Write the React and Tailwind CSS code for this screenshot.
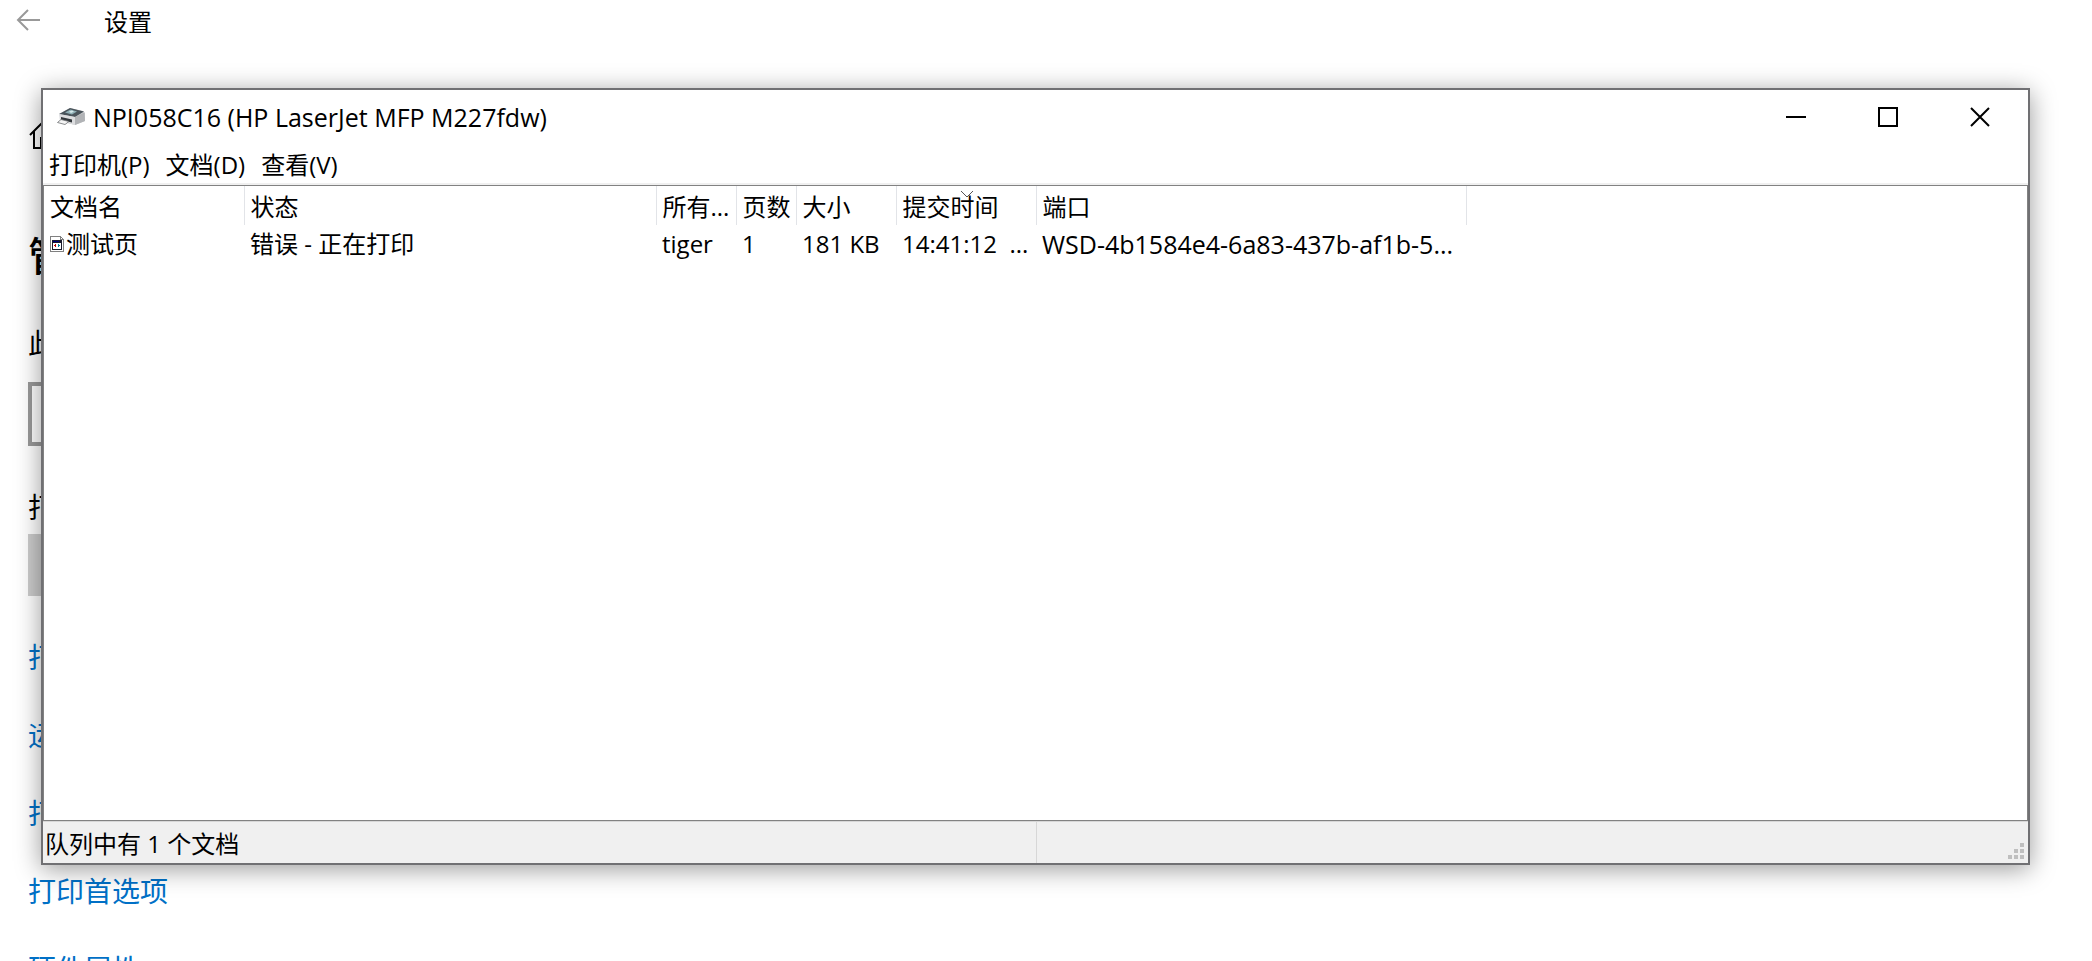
import React from 'react';

const columns = [
    { name: '文档名', width: 'w-[200px]' },
    { name: '状态', width: 'w-[412px]' },
    { name: '所有...', width: 'w-[80px]' },
    { name: '页数', width: 'w-[60px]' },
    { name: '大小', width: 'w-[100px]' },
    { name: '提交时间', width: 'w-[140px]', sorted: true },
    { name: '端口', width: 'w-[430px]' },
];

const jobs = [
    ['测试页', '错误 - 正在打印', 'tiger', '1', '181 KB', '14:41:12  ...', 'WSD-4b1584e4-6a83-437b-af1b-5...'],
];

const menus = ['打印机(P)', '文档(D)', '查看(V)'];

const links = ['打', '运', '打', '打印首选项', '硬件属性'];

function PrinterIcon() {
    return (
        <svg width="28" height="20" viewBox="0 0 28 20" aria-hidden="true">
            <path d="M3 7 L13 1 L26 4 L28 6 L28 14 L18 18 L3 14 Z" fill="#c9cbcd" />
            <path d="M2 7 L13 1 L27 4.5 L18 10 Z" fill="#4a545b" />
            <path d="M8 5.5 L13.5 2.5 L20 4.5 L15 7.5 Z" fill="#8fb0b6" />
            <path d="M12 4.5 L15 3.6 L17 4.5 L14 6 Z" fill="#d5e8ea" />
            <path d="M2 7 L18 10 L18 18 L3 14 Z" fill="#dcdddf" />
            <path d="M18 10 L27.5 5.5 L28 14 L18 18 Z" fill="#b1b3b6" />
            <path d="M4 10 L15 12.5 L15 15.5 L4 13 Z" fill="#33383c" />
            <path d="M4 12.5 L12 14.5 L8 17.5 L0.5 15.5 Z" fill="#f4f4f4" stroke="#6d7072" strokeWidth="0.8" />
        </svg>
    );
}

function DocumentIcon() {
    return (
        <svg width="14" height="16" viewBox="0 0 14 16" shapeRendering="crispEdges" aria-hidden="true">
            <path d="M0.5 0.5 H10.5 L13.5 3.5 V15.5 H0.5 Z" fill="#fff" stroke="#808080" />
            <path d="M10.5 0.5 V3.5 H13.5" fill="none" stroke="#808080" />
            <rect x="2" y="4" width="10" height="10" fill="#1a1a2a" />
            <rect x="3" y="7" width="8" height="6" fill="#fff" />
            <rect x="3" y="5" width="6" height="1" fill="#000080" />
            <rect x="4" y="9" width="1" height="1" fill="#c00000" />
            <rect x="5" y="8" width="1" height="3" fill="#c00000" />
            <rect x="8" y="8" width="1" height="3" fill="#0080a0" />
            <rect x="9" y="9" width="1" height="1" fill="#0080a0" />
        </svg>
    );
}

function SettingsPage() {
    return (
        <div className="flex flex-col items-start text-[28px] leading-[38px] text-black">
            <header className="flex h-11 items-center pl-4 text-2xl">
                <button type="button" aria-label="Back" className="mr-16 pb-1">
                    <svg width="24" height="22" viewBox="0 0 24 22" fill="none" stroke="#999" strokeWidth="2" aria-hidden="true">
                        <path d="M24 11 H2 M12 1 L2 11 L12 21" />
                    </svg>
                </button>
                <span>设置</span>
            </header>

            <nav className="mt-[76px] pl-[29px]">
                <svg width="30" height="30" viewBox="0 0 30 30" fill="none" stroke="#000" strokeWidth="2" aria-hidden="true">
                    <path d="M1 15 L15 1 L29 15 M5 11 V28 H12 V18 H18 V28 H25 V11" />
                </svg>
            </nav>

            <main className="flex flex-col items-start pl-7">
                <h1 className="mt-20 text-[40px] font-medium leading-[52px]">管</h1>
                <label htmlFor="device" className="mt-[42px]">此</label>
                <input id="device" className="mt-5 h-16 w-48 border-4 border-[#999] bg-white" />
                <p className="mt-[42px]">打</p>
                <button type="button" aria-label="Open" className="mt-2 h-[62px] w-48 bg-[#ccc]" />
                <ul className="mt-[42px] flex flex-col gap-10">
                    {links.map((link, index) => (
                        <li key={index}>
                            <a href="#" className="block whitespace-nowrap text-[#0070c6]">{link}</a>
                        </li>
                    ))}
                </ul>
            </main>
        </div>
    );
}

function TitleBar() {
    return (
        <header className="flex h-[54px] items-center pr-[2px]">
            <div className="flex flex-1 items-center gap-2 pl-[14px] text-[25px]">
                <PrinterIcon />
                <h2>NPI058C16 (HP LaserJet MFP M227fdw)</h2>
            </div>
            <button type="button" aria-label="Minimize" className="flex h-full w-[92px] items-center justify-center">
                <span className="h-[2px] w-5 bg-black" />
            </button>
            <button type="button" aria-label="Maximize" className="flex h-full w-[92px] items-center justify-center">
                <span className="size-5 border-2 border-black" />
            </button>
            <button type="button" aria-label="Close" className="flex h-full w-[92px] items-center justify-center">
                <svg width="20" height="20" viewBox="0 0 20 20" stroke="#000" strokeWidth="2" aria-hidden="true">
                    <path d="M1 1 L19 19 M19 1 L1 19" />
                </svg>
            </button>
        </header>
    );
}

function JobList() {
    return (
        <div className="flex-1 overflow-hidden border border-[#828282] bg-white">
            <table className="w-[1422px] table-fixed border-collapse text-left">
                <thead>
                    <tr className="h-[39px]">
                        {columns.map((column) => (
                            <th key={column.name} className={`${column.width} relative whitespace-nowrap border-r border-[#e2e4e8] p-0 pl-[6px] pt-[2px] font-normal`}>
                                {column.name}
                                {column.sorted && (
                                    <svg className="absolute left-[63px] top-1" width="14" height="8" viewBox="0 0 14 8" fill="none" stroke="#555" aria-hidden="true">
                                        <path d="M1 1 L7 7 L13 1" />
                                    </svg>
                                )}
                            </th>
                        ))}
                    </tr>
                </thead>
                <tbody>
                    {jobs.map((job) => (
                        <tr key={job[0]} className="h-9">
                            {job.map((value, index) => (
                                <td key={index} className={`whitespace-pre p-0 pl-[6px] pt-[2px] ${index === 6 ? 'text-[25px]' : ''}`}>
                                    {index === 0 ? (
                                        <span className="flex items-center gap-[2px]">
                                            <DocumentIcon />
                                            {value}
                                        </span>
                                    ) : value}
                                </td>
                            ))}
                        </tr>
                    ))}
                </tbody>
            </table>
        </div>
    );
}

function StatusBar() {
    return (
        <footer className="flex h-[42px] border-t border-[#d7d7d7] bg-[#f0f0f0]">
            <div className="flex w-1/2 items-center pl-[2px] pt-[2px]">队列中有 1 个文档</div>
            <div className="flex flex-1 items-end justify-end border-l border-[#d7d7d7] p-1">
                {/* Resize grip */}
                <svg width="16" height="16" viewBox="0 0 16 16" fill="#bfbfbf" aria-hidden="true">
                    <path d="M12 0h4v4h-4z M6 6h4v4h-4z M12 6h4v4h-4z M0 12h4v4h-4z M6 12h4v4h-4z M12 12h4v4h-4z" />
                </svg>
            </div>
        </footer>
    );
}

export default function App() {
    return (
        <div className="relative h-screen overflow-hidden bg-white font-['Open_Sans','Noto_Sans_CJK_SC',sans-serif]">
            <SettingsPage />

            {/* Print queue window */}
            <section className="absolute bottom-24 left-[41px] right-[62px] top-[88px] flex flex-col border-2 border-[#707073] bg-white text-2xl leading-8 text-black shadow-[0_4px_24px_rgba(0,0,0,0.4)]">
                <TitleBar />
                <nav className="flex h-[41px] items-center gap-4 border-b-2 border-[#f0f0f0] pl-[6px] pt-[2px]">
                    {menus.map((menu) => (
                        <button key={menu} type="button">{menu}</button>
                    ))}
                </nav>
                <JobList />
                <StatusBar />
            </section>
        </div>
    );
}
